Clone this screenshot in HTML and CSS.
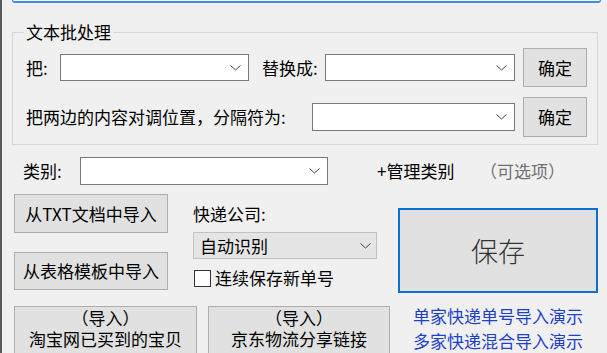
FILE: index.html
```html
<!DOCTYPE html>
<html lang="zh-CN">
<head>
    <meta charset="UTF-8">
    <title>快递单号导入</title>
    <link rel="stylesheet" href="styles.css">
</head>
<body>

    <div class="window">
        <div class="topbar"></div>

        <!-- 文本批处理 -->
        <fieldset class="group">
            <legend>文本批处理</legend>
            <div class="row">
                <label class="lbl lbl-ba">把:</label>
                <div class="combo combo-a">
                    <svg class="arrow" width="11" height="6" viewBox="0 0 11 6"><polyline points="0.5,0.5 5.5,5 10.5,0.5" fill="none" stroke="#444" stroke-width="1"/></svg>
                </div>
                <label class="lbl lbl-to">替换成:</label>
                <div class="combo combo-b">
                    <svg class="arrow" width="11" height="6" viewBox="0 0 11 6"><polyline points="0.5,0.5 5.5,5 10.5,0.5" fill="none" stroke="#444" stroke-width="1"/></svg>
                </div>
                <button class="btn btn-ok">确定</button>
            </div>
            <div class="row row-2">
                <label class="lbl lbl-swap">把两边的内容对调位置，分隔符为:</label>
                <div class="combo combo-c">
                    <svg class="arrow" width="11" height="6" viewBox="0 0 11 6"><polyline points="0.5,0.5 5.5,5 10.5,0.5" fill="none" stroke="#444" stroke-width="1"/></svg>
                </div>
                <button class="btn btn-ok btn-ok2">确定</button>
            </div>
        </fieldset>

        <!-- 类别 -->
        <div class="cat-row">
            <label class="lbl lbl-cat">类别:</label>
            <div class="combo combo-cat">
                <svg class="arrow" width="11" height="6" viewBox="0 0 11 6"><polyline points="0.5,0.5 5.5,5 10.5,0.5" fill="none" stroke="#444" stroke-width="1"/></svg>
            </div>
            <span class="manage">+管理类别</span>
            <span class="optional">（可选项）</span>
        </div>

        <div class="main-row">
            <div class="col-left">
                <button class="btn btn-txt">从TXT文档中导入</button>
                <button class="btn btn-sheet">从表格模板中导入</button>
            </div>
            <div class="col-mid">
                <div class="lbl">快递公司:</div>
                <div class="combo combo-company">
                    <span class="combo-text">自动识别</span>
                    <svg class="arrow" width="11" height="6" viewBox="0 0 11 6"><polyline points="0.5,0.5 5.5,5 10.5,0.5" fill="none" stroke="#444" stroke-width="1"/></svg>
                </div>
                <div class="check-row">
                    <span class="checkbox"></span>
                    <span>连续保存新单号</span>
                </div>
            </div>
            <button class="btn btn-save">保存</button>
        </div>

        <div class="bottom-row">
            <button class="btn btn-import">（导入）<br>淘宝网已买到的宝贝</button>
            <button class="btn btn-import btn-jd">（导入）<br>京东物流分享链接</button>
            <div class="links">
                <a href="#">单家快递单号导入演示</a>
                <a href="#">多家快递混合导入演示</a>
            </div>
        </div>
    </div>

</body>
</html>
```

FILE: styles.css
```css
body {
    margin: 0;
    background-color: #f0f0f0;
}

.window {
    width: 607px;
    height: 353px;
    overflow: hidden;
    background-color: #f0f0f0;
    box-shadow: inset 2px 0 0 #5a5a5a;
    font-family: "Noto Sans CJK SC", "Noto Sans", sans-serif;
    font-size: 17px;
    line-height: 20px;
    color: #000;
}

.topbar {
    margin-left: 12px;
    width: 589px;
    height: 3px;
    box-sizing: border-box;
    background-color: #fafafa;
    border: 1px solid #3a8ee6;
    border-top: none;
    border-bottom-width: 2px;
    border-radius: 0 0 3px 3px;
}

/* group box */
.group {
    margin: 19px 0 0 12px;
    width: 586px;
    box-sizing: border-box;
    padding: 6px 10px 7px 13px;
    border: 1px solid #d6d6d6;
    min-width: 0;
}

.group legend {
    padding: 0 2px;
    margin-left: -2px;
    line-height: 20px;
}

.row {
    display: flex;
    align-items: center;
    height: 39px;
}

.row-2 {
    margin-top: 10px;
    height: 40px;
}

.lbl {
    white-space: nowrap;
}

.lbl-ba { width: 34px; }
.lbl-to { width: 63px; margin-left: 13px; }
.lbl-swap { width: 286px; }

.combo {
    display: flex;
    align-items: center;
    justify-content: flex-end;
    box-sizing: border-box;
    height: 27px;
    padding-right: 7px;
    background-color: #fff;
    border: 1px solid #7a7a7a;
    flex-shrink: 0;
}

.combo-a { width: 189px; }
.combo-b { width: 190px; }
.combo-c { width: 203px; height: 28px; }

.btn {
    box-sizing: border-box;
    padding: 0;
    font-family: inherit;
    font-size: 17px;
    line-height: 20px;
    color: #000;
    background-color: #e1e1e1;
    border: 1px solid #adadad;
    border-radius: 0;
    flex-shrink: 0;
}

.btn-ok {
    width: 64px;
    height: 39px;
    margin-left: 8px;
}

.btn-ok2 { height: 40px; }

/* category row */
.cat-row {
    display: flex;
    align-items: center;
    margin-top: 12px;
    padding-left: 23px;
    height: 28px;
}

.lbl-cat { width: 57px; }

.combo-cat {
    width: 248px;
    height: 28px;
}

.manage {
    width: 103px;
    margin-left: 49px;
    white-space: nowrap;
}

.optional {
    color: #707070;
    white-space: nowrap;
}

/* main area */
.main-row {
    display: flex;
    align-items: flex-start;
    margin-top: 9px;
}

.col-left {
    display: flex;
    flex-direction: column;
    margin-left: 14px;
    width: 154px;
}

.btn-txt { height: 39px; }

.btn-sheet {
    height: 38px;
    margin-top: 19px;
}

.col-mid {
    margin-left: 25px;
    width: 184px;
    padding-top: 10px;
}

.combo-company {
    margin-top: 8px;
    justify-content: space-between;
    padding-left: 6px;
    padding-right: 5px;
    background-color: #e5e5e5;
    border-color: #c2c2c2;
}

.check-row {
    display: flex;
    align-items: center;
    margin-top: 9px;
    height: 20px;
}

.checkbox {
    width: 17px;
    height: 17px;
    box-sizing: border-box;
    margin: 0 4px 0 1px;
    background-color: #fff;
    border: 1px solid #333;
}

.btn-save {
    margin: 14px 0 0 21px;
    width: 200px;
    height: 85px;
    border: 2px solid #0f6fd1;
    font-size: 27px;
    font-weight: 300;
    color: #333;
}

/* bottom */
.bottom-row {
    display: flex;
    align-items: flex-start;
    margin-top: 13px;
}

.btn-import {
    margin-left: 14px;
    width: 183px;
    height: 60px;
    padding: 0 0 16px;
    line-height: 21px;
}

.btn-jd {
    margin-left: 11px;
    width: 182px;
}

.links {
    display: flex;
    flex-direction: column;
    margin: -3px 0 0 23px;
    line-height: 25px;
}

.links a {
    color: #1d3fcb;
    text-decoration: none;
    white-space: nowrap;
}
```
